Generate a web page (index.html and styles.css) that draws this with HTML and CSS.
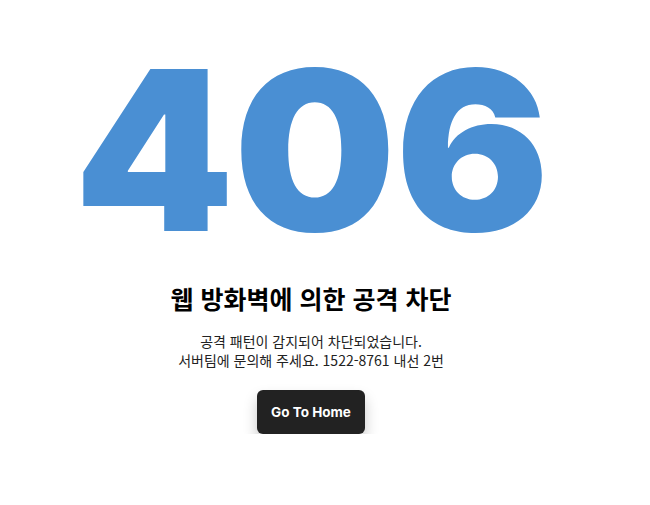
FILE: index.html
```html
<!DOCTYPE html>
<html lang="ko">
<head>
<meta charset="utf-8">
<link rel="stylesheet" href="styles.css">
</head>
<body>
<main class="page">
  <div class="code">406</div>
  <h1 class="title">웹 방화벽에 의한 공격 차단</h1>
  <p class="desc">공격 패턴이 감지되어 차단되었습니다.<br>서버팀에 문의해 주세요. 1522-8761 내선 2번</p>
  <a class="btn" href="#">Go To Home</a>
</main>
</body>
</html>
```
FILE: styles.css
```css
html, body { margin: 0; padding: 0; background: #fff; }
body { font-family: "Noto Sans CJK KR", "Noto Sans", sans-serif; color: #111; }
.page {
  width: 622px;
  display: flex;
  flex-direction: column;
  align-items: center;
}
.code {
  font-family: Inter, "Noto Sans", sans-serif;
  font-weight: 900;
  font-size: 222px;
  line-height: 1;
  color: #4a8fd3;
  letter-spacing: -1px;
  margin-top: 40px;
  height: 222px;
  transform: scaleX(1.03);
}
.title {
  font-size: 25px;
  font-weight: 700;
  margin: 20px 0 0;
  line-height: 32px;
  color: #000;
}
.desc {
  margin: 18px 0 0;
  font-size: 14px;
  line-height: 19px;
  text-align: center;
  color: #222;
}
.btn {
  margin-top: 20px;
  display: flex;
  align-items: center;
  justify-content: center;
  width: 108px;
  height: 44px;
  background: #222;
  color: #fff;
  border-radius: 6px;
  font-family: Inter, "Noto Sans", sans-serif;
  font-weight: 700;
  font-size: 13.5px;
  text-decoration: none;
  box-shadow: 0 8px 14px rgba(0,0,0,0.22);
}
```
